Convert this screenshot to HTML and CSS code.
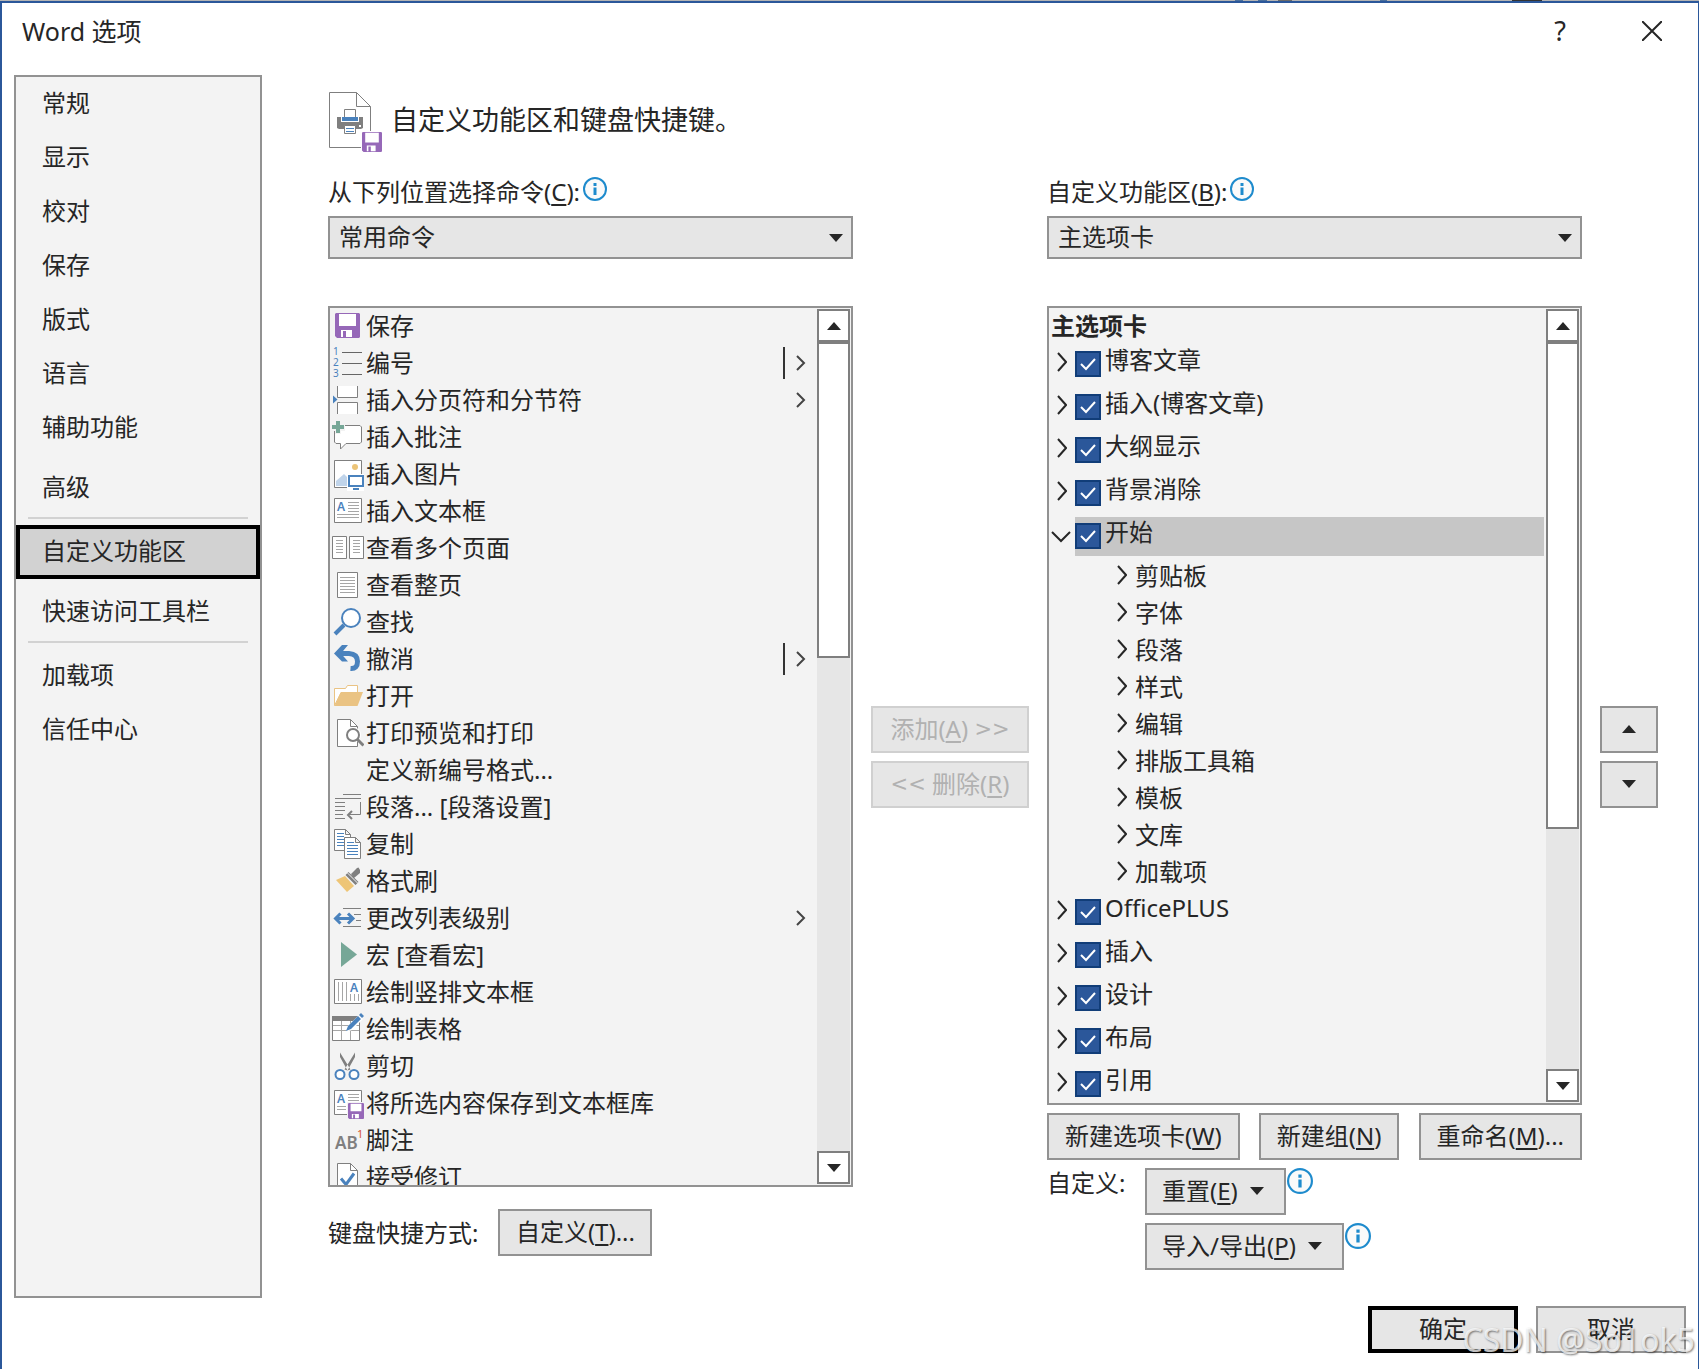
FILE: index.html
```html
<!DOCTYPE html>
<html lang="zh-CN">
<head>
<meta charset="utf-8">
<title>Word 选项</title>
<link rel="stylesheet" href="styles.css">
</head>
<body>
<svg class="defs" aria-hidden="true">
  <symbol id="right" viewBox="0 0 10 20"><path d="M1 1l8 9-8 9" fill="none" stroke="#262626" stroke-width="2"/></symbol>
  <symbol id="down" viewBox="0 0 20 12"><path d="M1 1l9 9 9-9" fill="none" stroke="#262626" stroke-width="2"/></symbol>
  <symbol id="more" viewBox="0 0 10 16"><path d="M1 1l7 7-7 7" fill="none" stroke="#444" stroke-width="2"/></symbol>
  <symbol id="tri-down" viewBox="0 0 14 8"><path d="M0 0h14l-7 8z" fill="#262626"/></symbol>
  <symbol id="tri-up" viewBox="0 0 14 8"><path d="M0 8h14l-7-8z" fill="#262626"/></symbol>
  <symbol id="info" viewBox="0 0 24 24"><circle cx="12" cy="12" r="11" fill="#fafafa" stroke="#1e8bcd" stroke-width="2"/><path d="M10.500 6h3v3h-3zM10.500 10.500h3v7.500h-3z" fill="#1e8bcd"/></symbol>
  <symbol id="disk" viewBox="0 0 25 25"><path d="M1 0h23l1 1v23l-1 1H2l-2-2V1z" fill="#9668b8"/><path d="M4 1h17v12H4zM6 17h11v7h-6v-6H8v6H6z" fill="#fff"/></symbol>
</svg>

<div class="dialog">
  <header class="titlebar">
    <h1 class="title">Word 选项</h1>
    <button class="tool" type="button" aria-label="帮助">?</button>
    <button class="tool" type="button" aria-label="关闭"><svg width="20" height="20" viewBox="0 0 20 20"><path d="M0 0l20 20M20 0L0 20" stroke="#262626" stroke-width="2"/></svg></button>
  </header>

  <div class="content">
    <nav class="sidebar">
      <a class="nav" href="#">常规</a>
      <a class="nav" href="#">显示</a>
      <a class="nav" href="#">校对</a>
      <a class="nav" href="#">保存</a>
      <a class="nav" href="#">版式</a>
      <a class="nav" href="#">语言</a>
      <a class="nav" href="#">辅助功能</a>
      <a class="nav spaced" href="#">高级</a>
      <hr class="sep">
      <a class="nav active" href="#" aria-current="page">自定义功能区</a>
      <a class="nav spaced" href="#">快速访问工具栏</a>
      <hr class="sep">
      <a class="nav" href="#">加载项</a>
      <a class="nav" href="#">信任中心</a>
    </nav>

    <main class="main">
      <div class="heading">
        <svg width="54" height="61" viewBox="0 0 54 61">
          <path d="M.5.500h27L41.500 14.500V55.500H.5z" fill="#fff" stroke="#7f7f7f"/>
          <path d="M27.500.500v14h14" fill="none" stroke="#7f7f7f"/>
          <path d="M8 25h26v11l-2 1H10l-2-1z" fill="#7f7f7f"/>
          <path d="M12 24h18v6H12z" fill="#fff"/><path d="M13 25h16v4H13z" fill="#4a82bd"/>
          <path d="M15.500 17.500h11v8h-11zM15.500 33.500h11v8h-11z" fill="#fff" stroke="#7f7f7f"/>
          <path d="M15 25h12v4H15z" fill="#4a82bd"/>
          <path d="M17 36.500h8M17 39.500h8" stroke="#4a82bd"/><path d="M30 33h2v2h-2z" fill="#fff"/>
          <path d="M32 39h22v22H32z" fill="#fff"/><use href="#disk" x="33" y="40" width="20" height="20"/>
        </svg>
        <h2 class="heading-text">自定义功能区和键盘快捷键。</h2>
      </div>

      <div class="columns">
        <section class="source">
          <div class="field-label"><label for="from">从下列位置选择命令(<u>C</u>):</label><svg class="info"><use href="#info"/></svg></div>
          <div class="select-box"><select id="from"><option>常用命令</option></select><svg class="tri"><use href="#tri-down"/></svg></div>
          <div class="list commands">
            <ul class="rows">
              <li class="row"><svg class="ico"><use href="#disk" x="3" y="5" width="25" height="25"/></svg>保存</li>
              <li class="row"><svg class="ico"><g class="num"><text x="1" y="10">1</text><text x="1" y="21">2</text><text x="1" y="32">3</text></g><path d="M10 7.500h20M10 18.500h20M10 29.500h20" stroke="#666"/></svg>编号<span class="split"></span><svg class="more"><use href="#more"/></svg></li>
              <li class="row"><svg class="ico"><path d="M5.500 4v11.500h20V4M5.500 32V20.500h20V32" fill="#fff" stroke="#7f7f7f"/><path d="M1 13.500l4.500 4-4.500 4z" fill="#4a82bd"/></svg>插入分页符和分节符<svg class="more solo"><use href="#more"/></svg></li>
              <li class="row"><svg class="ico"><path d="M4 6.500h24l1.500 1.500v15L28 24.500H14L8.500 30v-5.500H4L2.500 23V8z" fill="#fff" stroke="#7f7f7f"/><path d="M0 5h3V2h6v3h4v7H9v3H3v-3H0z" fill="#f3f3f3"/><path d="M0 6h4V2h4v4h4v4H8v4H4v-4H0z" fill="#76a797"/></svg>插入批注</li>
              <li class="row"><svg class="ico"><path d="M2.500 4.500h27v27h-27z" fill="#fff" stroke="#7f7f7f"/><circle cx="23" cy="11" r="3" fill="#ecc477"/><path d="M4 30V25l8-7 3 3v9z" fill="#c0d4ea"/><path d="M15 18h17v17H15z" fill="#fff"/><path d="M17 20h14v10H17zM21 33h6" fill="#fff" stroke="#4a82bd" stroke-width="2"/></svg>插入图片</li>
              <li class="row"><svg class="ico"><path d="M2.500 5.500h27v24h-27z" fill="#fff" stroke="#7f7f7f"/><text class="a" x="5" y="18">A</text><path d="M16 9.500h11M16 12.500h11M16 15.500h11M16 18.500h11M5 21.500h22M5 24.500h22" stroke="#a6a6a6"/></svg>插入文本框</li>
              <li class="row"><svg class="ico"><path d="M.5 6.500h14v22H.5zM17.500 6.500h14v22h-14z" fill="#fff" stroke="#7f7f7f"/><path d="M4 10.500h7M4 13.500h7M4 16.500h7M4 19.500h7M4 22.500h7M21 10.500h7M21 13.500h7M21 16.500h7M21 19.500h7M21 22.500h7" stroke="#a6a6a6"/></svg>查看多个页面</li>
              <li class="row"><svg class="ico"><path d="M5.500 5.500h20v25h-20z" fill="#fff" stroke="#7f7f7f"/><path d="M8 10.500h15M8 13.500h15M8 16.500h15M8 19.500h15M8 22.500h15M8 25.500h15" stroke="#a6a6a6"/></svg>查看整页</li>
              <li class="row"><svg class="ico"><circle cx="19" cy="14" r="9" fill="#fff" stroke="#4a82bd" stroke-width="2"/><path d="M12 21l-9 9" stroke="#4a82bd" stroke-width="4"/></svg>查找</li>
              <li class="row"><svg class="ico"><path d="M6 12.500h11q8.500.500 8.500 8t-7 7" fill="none" stroke="#4a82bd" stroke-width="5"/><path d="M2 12.500L10 4h6l-7 8.500 7 8h-6z" fill="#4a82bd"/></svg>撤消<span class="split"></span><svg class="more"><use href="#more"/></svg></li>
              <li class="row"><svg class="ico"><path d="M2.500 27.500v-17h11l2-3h10v7H9z" fill="#fff" stroke="#eac383"/><path d="M9 14h22l-5.500 14h-23z" fill="#eac383"/></svg>打开</li>
              <li class="row"><svg class="ico"><path d="M5.500 4.500h13l7 7v20h-20z" fill="#fff" stroke="#7f7f7f"/><path d="M18.500 4.500v7h7" fill="none" stroke="#7f7f7f"/><circle cx="21" cy="20" r="8" fill="#fff"/><circle cx="21" cy="20" r="6" fill="#fff" stroke="#7f7f7f" stroke-width="2"/><path d="M25 24l6.500 6.500" stroke="#7f7f7f" stroke-width="3"/></svg>打印预览和打印</li>
              <li class="row"><svg class="ico"></svg>定义新编号格式...</li>
              <li class="row"><svg class="ico"><path d="M11 5.500h18M3 9.500h26M3 13.500h10M3 17.500h10M3 21.500h10M3 25.500h8M3 29.500h10M28.500 13v12.500H16" fill="none" stroke="#7f7f7f"/><path d="M20 22l-4 4 4 4" fill="none" stroke="#7f7f7f" stroke-width="2"/></svg>段落... [段落设置]</li>
              <li class="row"><svg class="ico"><path d="M2.500 3.500h11l5 5v16h-16zM13.500 3.500v5h5" fill="#fff" stroke="#7f7f7f"/><path d="M5 7.500h7M5 10.500h7M5 13.500h7M5 16.500h7M5 19.500h7" stroke="#4a82bd"/><path d="M12.500 11.500h11l5 5v16h-16zM23.500 11.500v5h5" fill="#fff" stroke="#7f7f7f"/><path d="M15 16.500h7M15 19.500h11M15 22.500h11M15 25.500h11M15 28.500h11" stroke="#4a82bd"/></svg>复制</li>
              <li class="row"><svg class="ico"><path d="M4 17l9-4 9 10-7 6z" fill="#eec576"/><path d="M13.500 12l3-3 10 10-3 3zM19 11l6-6 1.500-.500L28 7v3l-6 5z" fill="#7f7f7f"/><path d="M15.500 10l10 10" stroke="#f3f3f3"/></svg>格式刷</li>
              <li class="row"><svg class="ico"><path d="M11 8.500h18M22 14.500h7M24 20.500h5M11 26.500h18" stroke="#7f7f7f"/><path d="M4 18.500h16" stroke="#4a82bd" stroke-width="3"/><path d="M8.500 13.500l-5 5 5 5M16 13.500l5 5-5 5" fill="none" stroke="#4a82bd" stroke-width="3"/></svg>更改列表级别<svg class="more solo"><use href="#more"/></svg></li>
              <li class="row"><svg class="ico"><path d="M9 5l16 12.500L9 30z" fill="#76a797"/></svg>宏 [查看宏]</li>
              <li class="row"><svg class="ico"><path d="M2.500 5.500h27v24h-27z" fill="#fff" stroke="#7f7f7f"/><path d="M6.500 8v19M10.500 8v19M14.500 8v19M18.500 20v7M22.500 20v7M26.500 20v7" stroke="#a6a6a6"/><text class="a" x="18" y="18">A</text></svg>绘制竖排文本框</li>
              <li class="row"><svg class="ico"><path d="M.5 5.500h27v24H.5z" fill="#fff" stroke="#7f7f7f"/><path d="M0 5h28v5H0z" fill="#7f7f7f"/><path d="M1 14.500h26M1 19.500h26M9.500 10v19M18.500 10v19" stroke="#a6a6a6"/><path d="M14 21l2-6L27 4l4 4-11 11z" fill="#fff"/><path d="M14 20l2-5L26 5l3 3-10 10zM27 4l2-2 3 3-2 2z" fill="#4a82bd"/></svg>绘制表格</li>
              <li class="row"><svg class="ico"><path d="M8 4.500l10.500 17-3 1L8 9zM23 4.500l-10.500 17 3 1L23 9z" fill="#7f7f7f"/><circle cx="8" cy="26.500" r="4.500" fill="#fff" stroke="#4a82bd" stroke-width="2"/><circle cx="22" cy="26.500" r="4.500" fill="#fff" stroke="#4a82bd" stroke-width="2"/></svg>剪切</li>
              <li class="row"><svg class="ico"><path d="M2.500 5.500h27v24h-27z" fill="#fff" stroke="#7f7f7f"/><text class="a" x="5" y="18">A</text><path d="M16 9.500h11M16 12.500h11M16 15.500h11M5 21.500h9M5 24.500h9" stroke="#a6a6a6"/><path d="M15 17h17v18H15z" fill="#f3f3f3"/><use href="#disk" x="16" y="18" width="16" height="16"/></svg>将所选内容保存到文本框库</li>
              <li class="row"><svg class="ico"><text class="ab" x="3" y="27">AB</text><text class="one" x="25" y="16">1</text></svg>脚注</li>
              <li class="row"><svg class="ico"><path d="M5.500 4.500h13l7 7v24h-20z" fill="#fff" stroke="#7f7f7f"/><path d="M18.500 4.500v7h7" fill="none" stroke="#7f7f7f"/><path d="M9 19.500l5 6 8-11" fill="none" stroke="#4a82bd" stroke-width="3"/></svg>接受修订</li>
            </ul>
            <div class="scrollbar">
              <button class="sb-btn" type="button" aria-label="向上滚动"><svg class="tri"><use href="#tri-up"/></svg></button>
              <div class="track"><div class="thumb"></div></div>
              <button class="sb-btn" type="button" aria-label="向下滚动"><svg class="tri"><use href="#tri-down"/></svg></button>
            </div>
          </div>
          <div class="keyboard"><span>键盘快捷方式:</span><button class="btn" type="button">自定义(<u>T</u>)...</button></div>
        </section>

        <div class="transfer">
          <button class="btn" type="button" disabled>添加(<u>A</u>) <span class="arrows">&gt;&gt;</span></button>
          <button class="btn" type="button" disabled><span class="arrows">&lt;&lt;</span> 删除(<u>R</u>)</button>
        </div>

        <section class="target">
          <div class="field-label"><label for="ribbon">自定义功能区(<u>B</u>):</label><svg class="info"><use href="#info"/></svg></div>
          <div class="select-box"><select id="ribbon"><option>主选项卡</option></select><svg class="tri"><use href="#tri-down"/></svg></div>
          <div class="list tabs">
            <div class="tree">
              <h3 class="tree-title">主选项卡</h3>
              <div class="tab"><button class="exp" type="button" aria-label="展开"><svg class="chev"><use href="#right"/></svg></button><label class="tab-label"><input type="checkbox" checked>博客文章</label></div>
              <div class="tab"><button class="exp" type="button" aria-label="展开"><svg class="chev"><use href="#right"/></svg></button><label class="tab-label"><input type="checkbox" checked>插入(博客文章)</label></div>
              <div class="tab"><button class="exp" type="button" aria-label="展开"><svg class="chev"><use href="#right"/></svg></button><label class="tab-label"><input type="checkbox" checked>大纲显示</label></div>
              <div class="tab"><button class="exp" type="button" aria-label="展开"><svg class="chev"><use href="#right"/></svg></button><label class="tab-label"><input type="checkbox" checked>背景消除</label></div>
              <div class="tab"><button class="exp open" type="button" aria-label="折叠"><svg class="chev-down"><use href="#down"/></svg></button><label class="tab-label selected"><input type="checkbox" checked>开始</label></div>
              <ul class="groups">
                <li class="group"><svg class="chev"><use href="#right"/></svg>剪贴板</li>
                <li class="group"><svg class="chev"><use href="#right"/></svg>字体</li>
                <li class="group"><svg class="chev"><use href="#right"/></svg>段落</li>
                <li class="group"><svg class="chev"><use href="#right"/></svg>样式</li>
                <li class="group"><svg class="chev"><use href="#right"/></svg>编辑</li>
                <li class="group"><svg class="chev"><use href="#right"/></svg>排版工具箱</li>
                <li class="group"><svg class="chev"><use href="#right"/></svg>模板</li>
                <li class="group"><svg class="chev"><use href="#right"/></svg>文库</li>
                <li class="group"><svg class="chev"><use href="#right"/></svg>加载项</li>
              </ul>
              <div class="tab"><button class="exp" type="button" aria-label="展开"><svg class="chev"><use href="#right"/></svg></button><label class="tab-label"><input type="checkbox" checked>OfficePLUS</label></div>
              <div class="tab"><button class="exp" type="button" aria-label="展开"><svg class="chev"><use href="#right"/></svg></button><label class="tab-label"><input type="checkbox" checked>插入</label></div>
              <div class="tab"><button class="exp" type="button" aria-label="展开"><svg class="chev"><use href="#right"/></svg></button><label class="tab-label"><input type="checkbox" checked>设计</label></div>
              <div class="tab"><button class="exp" type="button" aria-label="展开"><svg class="chev"><use href="#right"/></svg></button><label class="tab-label"><input type="checkbox" checked>布局</label></div>
              <div class="tab"><button class="exp" type="button" aria-label="展开"><svg class="chev"><use href="#right"/></svg></button><label class="tab-label"><input type="checkbox" checked>引用</label></div>
            </div>
            <div class="scrollbar">
              <button class="sb-btn" type="button" aria-label="向上滚动"><svg class="tri"><use href="#tri-up"/></svg></button>
              <div class="track"><div class="thumb"></div></div>
              <button class="sb-btn" type="button" aria-label="向下滚动"><svg class="tri"><use href="#tri-down"/></svg></button>
            </div>
          </div>
          <div class="tab-actions">
            <button class="btn" type="button">新建选项卡(<u>W</u>)</button>
            <button class="btn" type="button">新建组(<u>N</u>)</button>
            <button class="btn" type="button">重命名(<u>M</u>)...</button>
          </div>
          <div class="custom">
            <span class="custom-label">自定义:</span>
            <div class="custom-actions">
              <div class="with-info"><button class="btn drop" type="button"><span>重置(<u>E</u>)</span><svg class="tri"><use href="#tri-down"/></svg></button><svg class="info"><use href="#info"/></svg></div>
              <div class="with-info"><button class="btn drop" type="button"><span>导入/导出(<u>P</u>)</span><svg class="tri"><use href="#tri-down"/></svg></button><svg class="info"><use href="#info"/></svg></div>
            </div>
          </div>
        </section>

        <div class="reorder">
          <button class="btn" type="button" aria-label="上移"><svg class="tri"><use href="#tri-up"/></svg></button>
          <button class="btn" type="button" aria-label="下移"><svg class="tri"><use href="#tri-down"/></svg></button>
        </div>
      </div>
    </main>
  </div>

  <footer class="footer">
    <button class="btn default" type="button">确定</button>
    <button class="btn" type="button">取消</button>
    <span class="watermark">CSDN @So1ok5</span>
  </footer>
</div>
</body>
</html>
```

FILE: styles.css
```css
* { box-sizing: border-box; }

html { background: linear-gradient(90deg, #b4b4b4 1235px, #4a6f9c 1235px 1243px, #b4b4b4 1243px 1258px, #4a6f9c 1258px 1267px, #b4b4b4 1267px 1278px, #6a6a6a 1278px 1292px, #b4b4b4 1292px 1380px, #4a6f9c 1380px 1387px, #b4b4b4 1387px 1512px, #333 1512px 1542px, #b4b4b4 1542px) top / 100% 1px no-repeat #fff; }

body {
  margin: 0;
  color: #262626;
  font: 24px/30px "Noto Sans", "Noto Sans CJK SC", sans-serif;
}

button, select { font: inherit; color: inherit; }
svg { display: block; flex: none; }
u { text-decoration-thickness: 2px; text-underline-offset: 3px; text-decoration-skip-ink: none; }
h1, h2, h3, ul { margin: 0; padding: 0; font-weight: 400; list-style: none; }
.defs { position: absolute; width: 0; height: 0; }

/* dialog frame, with a sliver of the window behind it along the top */
.dialog {
  display: flex;
  flex-direction: column;
  min-height: calc(100vh - 1px);
  margin-top: 1px;
  border: solid #2b579a;
  border-width: 2px 1px 0 2px;
}

.titlebar { display: flex; align-items: center; height: 56px; padding: 0 14px 0 20px; }
.title { flex: 1; font-size: 25px; }
.tool {
  display: flex;
  align-items: center;
  justify-content: center;
  width: 64px;
  height: 48px;
  margin-left: 28px;
  padding: 0;
  border: 0;
  background: none;
  font-size: 27px;
}

.content { display: flex; flex: 1; padding: 16px 40px 0 12px; }

/* category list */
.sidebar { flex: none; width: 248px; border: 2px solid #929292; background: #f3f3f3; }
.nav {
  display: flex;
  align-items: center;
  height: 54px;
  padding: 0 0 2px 26px;
  color: inherit;
  text-decoration: none;
}
.spaced { margin-top: 6px; }
.active { padding-left: 22px; border: 4px solid #000; background: #d2d2d2; }
.sep { height: 2px; margin: 2px 12px 6px; border: 0; background: #d2d2d2; }

.main { flex: 1; min-width: 0; padding: 17px 0 0 66px; }
.heading { display: flex; align-items: center; gap: 8px; padding-left: 1px; }
.heading-text { padding-bottom: 6px; font-size: 27px; }

.columns {
  display: grid;
  grid-template-columns: minmax(0, 525fr) 158px minmax(0, 535fr) 58px;
  gap: 18px;
  margin-top: 24px;
}

.field-label { display: flex; height: 32px; gap: 3px; }
.info { width: 24px; height: 24px; }
.select-box { display: grid; align-items: center; margin-top: 7px; }
.select-box > * { grid-area: 1 / 1; }
.select-box .tri { justify-self: end; margin-right: 10px; pointer-events: none; }
select {
  width: 100%;
  height: 43px;
  padding: 0 9px 2px;
  appearance: none;
  border: 2px solid #929292;
  border-radius: 0;
  background: #e6e6e6;
}
.tri { width: 14px; height: 8px; }

/* list boxes */
.list {
  display: flex;
  margin-top: 47px;
  overflow: hidden;
  border: 2px solid #929292;
  background: #f3f3f3;
}
.commands { height: 881px; }
.tabs { height: 799px; }
.rows { flex: 1; padding-left: 2px; }
.row { display: flex; align-items: center; height: 37px; gap: 2px; padding-bottom: 2px; white-space: nowrap; }
.ico { align-self: flex-start; width: 32px; height: 37px; }
.num { fill: #4a82bd; font-size: 10px; }
.a { fill: #4a82bd; font-size: 12px; font-weight: 600; }
.ab { fill: #7f7f7f; font-size: 17px; font-weight: 600; }
.one { fill: #d65532; font-size: 11px; }
.split { width: 2px; height: 32px; margin-left: auto; background: #333; }
.more { width: 10px; height: 16px; margin: 0 10px 0 9px; }
.solo { margin-left: auto; }

.scrollbar { display: flex; flex: none; flex-direction: column; width: 33px; margin: 1px; background: #e6e6e6; }
.sb-btn {
  display: flex;
  align-items: center;
  justify-content: center;
  height: 33px;
  padding: 0;
  border: 2px solid #7f7f7f;
  background: #fff;
}
.track { flex: 1; }
.thumb { height: 39%; border: 2px solid #7f7f7f; background: #fff; }
.tabs .thumb { height: 67%; }

/* ribbon tab tree */
.tree { flex: 1; padding: 0 1px 0 2px; }
.tree-title { height: 37px; line-height: 35px; font-size: 24px; font-weight: 700; }
.tab { display: flex; height: 39px; margin-bottom: 4px; }
.exp { display: flex; flex: none; align-items: flex-start; width: 24px; padding: 7px 6px; border: 0; background: none; }
.open { padding: 14px 0; }
.chev { width: 10px; height: 20px; }
.chev-down { width: 20px; height: 12px; }
.tab-label { display: flex; flex: 1; gap: 4px; }
.selected { background: #c6c6c6; }
input[type="checkbox"] {
  flex: none;
  width: 26px;
  height: 26px;
  margin: 6px 0 0;
  appearance: none;
  border: 2px solid #113d78;
  background: #2b579a url("data:image/svg+xml,%3Csvg xmlns='http://www.w3.org/2000/svg' viewBox='0 0 22 22'%3E%3Cpath d='M4 11l5 5 9-10' fill='none' stroke='white' stroke-width='2'/%3E%3C/svg%3E");
}
.groups { padding-left: 66px; }
.group { display: flex; height: 37px; gap: 8px; line-height: 32px; }
.group .chev { margin-top: 5px; }

/* buttons */
.btn {
  display: flex;
  align-items: center;
  justify-content: center;
  height: 47px;
  padding: 0 16px 2px;
  border: 2px solid #929292;
  background: #e6e6e6;
  white-space: pre;
}
.btn:disabled { border-color: #d0d0d0; color: #b1b1b1; }
.arrows { font-family: "DejaVu Sans", sans-serif; font-size: 21px; }
.transfer, .reorder { display: flex; flex-direction: column; gap: 8px; padding-top: 529px; }
.transfer .btn, .reorder .btn { padding: 0 0 2px; }
.keyboard { display: flex; align-items: center; gap: 20px; margin-top: 22px; }
.keyboard .btn { width: 154px; }
.tab-actions { display: flex; justify-content: space-between; margin-top: 8px; }
.custom { display: flex; margin-top: 8px; }
.custom-label { width: 98px; }
.custom-actions { display: flex; flex-direction: column; gap: 8px; }
.with-info { display: flex; gap: 1px; }
.with-info .info { width: 26px; height: 26px; }
.drop { gap: 12px; padding: 0 20px 2px 15px; }

.footer { position: relative; display: flex; justify-content: flex-end; gap: 18px; padding: 8px 12px 16px; }
.footer .btn { width: 150px; }
.footer .default { border: 4px solid #000; }
.watermark {
  position: absolute;
  right: 3px;
  bottom: 14px;
  color: rgba(255, 255, 255, .75);
  font-size: 32px;
  text-shadow: 1px 1px 2px rgba(0, 0, 0, .5);
  pointer-events: none;
}
```
